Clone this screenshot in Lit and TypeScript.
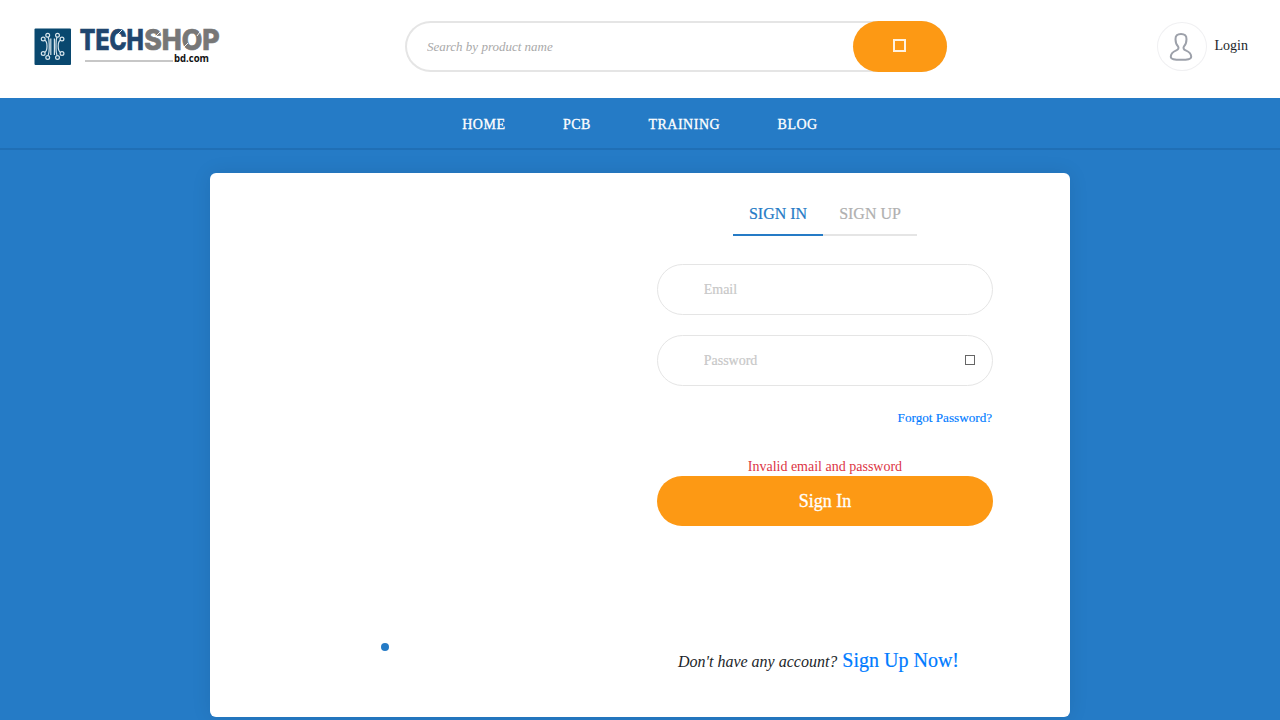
import { LitElement, html, css, svg } from "lit";
import { customElement, state } from "lit/decorators.js";

@customElement("shop-logo")
export class ShopLogo extends LitElement {
  static styles = css`
    :host { display: block; width: 190px; height: 42px; }
    svg { display: block; overflow: visible; }
    .word { font-family: Inter, "Liberation Sans", sans-serif; font-weight: 800; font-size: 28px; stroke-width: 0.7px; }
    .tech { fill: #20466f; stroke: #20466f; }
    .shop { fill: #777; stroke: #777; }
    .domain { font-family: "Open Sans", "Noto Sans", sans-serif; font-weight: 700; font-size: 10px; }
  `;
  render() {
    const half = svg`
      <path d="M17.8 11.5v16.500M15.200 10c1.200 3 1 4 1 9.200s.2 6.200-1 9.200M11.600 13c2 1 2.400 2.400 2.400 6.200s-.4 5.200-2.400 6.200" />
      <circle cx="14.700" cy="8.200" r="1.900" /><circle cx="10.200" cy="12" r="1.900" />
      <circle cx="10.200" cy="26.500" r="1.900" /><circle cx="14.700" cy="30.500" r="1.900" />`;
    return html`
      <svg width="190" height="42" viewBox="0 0 190 42">
        <rect x="1.5" y="1.5" width="36.5" height="36.5" rx="1" fill="#09486f" />
        <g fill="#09486f" stroke="#d7e5ec" stroke-width="1.2">
          <g>${half}</g>
          <g transform="translate(39.2 0) scale(-1 1)">${half}</g>
        </g>
        <text class="word tech" x="46.8" y="22.7" textLength="64" lengthAdjust="spacingAndGlyphs">TECH</text>
        <text class="word shop" x="111.2" y="22.7" textLength="75.5" lengthAdjust="spacingAndGlyphs">SHOP</text>
        <path d="M83 9l6-6M123 9l6-6M150 21l5-5M164 9l5-7" stroke="#fff" stroke-width=".9" />
        <path d="M52 34h88" stroke="#b4b4b4" stroke-width="1.5" />
        <text class="domain" x="141" y="34.5" fill="#111" textLength="35" lengthAdjust="spacingAndGlyphs">bd.com</text>
      </svg>`;
  }
}

@customElement("app-root")
export class AppRoot extends LitElement {
  @state() private tab = "SIGN IN";

  static styles = css`
    :host {
      display: block; height: 720px; overflow: hidden; background: #257bc6;
      font-family: "Liberation Serif", "Times New Roman", serif; font-size: 14px; line-height: 20px; color: #212529;
    }
    * { box-sizing: border-box; }
    button, input { font: inherit; border: 0; background: none; padding: 0; margin: 0; outline: 0; }
    .header { display: flex; align-items: flex-start; height: 98px; padding: 0 32px 0 33px; background: #fff; }
    .logo { margin-top: 27px; }
    .search {
      display: flex; width: 542px; height: 51px; margin: 21px 0 0 182px;
      border-radius: 26px; box-shadow: inset 0 0 0 2px #e5e5e5;
    }
    .search-input { flex: 1; min-width: 0; padding: 0 0 0 22px; font-size: 13px; font-style: italic; color: #555; }
    .search-input::placeholder { color: #a9a9a9; opacity: 1; }
    .search-button { display: flex; align-items: center; justify-content: center; width: 94px; padding: 0 1px 2px 0; border-radius: 26px; background: #fd9914; }
    .box { width: 13px; height: 13px; border: 2px solid #fff2df; }
    .box.small { width: 10px; height: 10px; margin-bottom: 1px; border: 1px solid #666; }
    .login { display: flex; align-items: center; gap: 8px; margin: 22px 0 0 auto; }
    .avatar { display: flex; align-items: center; justify-content: center; width: 50px; height: 49px; border: 1px solid #f0f0f2; border-radius: 50%; }
    .login-text { padding-bottom: 2px; }
    .nav {
      display: flex; justify-content: center; gap: 57.5px; height: 52px; padding: 17px 0 0;
      border-bottom: 2px solid #206fb5; color: #fff; letter-spacing: 0.5px; -webkit-text-stroke: 0.3px #fff;
    }
    .card {
      display: flex; width: 860px; height: 544px; margin: 23px auto 0; border-radius: 6px;
      background: #fff; box-shadow: 0 0 20px rgba(0, 0, 0, 0.09);
    }
    .visual { width: 430px; padding: 470px 0 0 171px; }
    .dot { width: 8px; height: 8px; border-radius: 50%; background: #257bc6; }
    .panel { display: flex; flex-direction: column; width: 335.5px; margin-left: 17.2px; padding-top: 24px; }
    .tabs { display: flex; justify-content: center; }
    .tab { height: 39px; padding: 2px 16px 5px; border-bottom: 2px solid #e5e5e5; font-size: 16px; color: #b0b0b0; -webkit-text-stroke: 0.2px; }
    .tab.active { border-color: #257bc6; color: #257bc6; }
    .field { display: flex; align-items: center; height: 51px; margin-top: 28px; padding: 0 17px 0 45.5px; border: 1px solid #e5e5e5; border-radius: 26px; }
    .field.second { margin-top: 20px; }
    .field-input { flex: 1; min-width: 0; }
    .field-input::placeholder { color: #c8c8c8; opacity: 1; -webkit-text-stroke: 0.2px #c8c8c8; }
    .forgot { margin-top: 22px; padding-right: 0.5px; text-align: right; font-size: 13.2px; color: #007bff; -webkit-text-stroke: 0.15px; }
    .error { margin-top: 29px; text-align: center; color: #dc3545; }
    .submit { height: 50px; margin-top: -0.6px; border-radius: 25px; background: #fd9914; color: #fff; font-size: 18px; -webkit-text-stroke: 0.3px #fff; }
    .join { display: flex; align-items: baseline; gap: 5px; margin: 121.6px 0 0 20.8px; white-space: nowrap; }
    .question { font-size: 16px; font-style: italic; }
    .now { font-size: 20px; line-height: 24px; color: #007bff; -webkit-text-stroke: 0.2px; }
  `;

  render() {
    return html`
      <header class="header">
        <shop-logo class="logo"></shop-logo>
        <div class="search">
          <input class="search-input" placeholder="Search by product name" />
          <button class="search-button" aria-label="Search"><span class="box"></span></button>
        </div>
        <div class="login">
          <span class="avatar">
            <svg width="25" height="30" viewBox="0 0 25 30" fill="none" stroke="#9da1aa" stroke-width="2" stroke-linejoin="round">
              <path d="M12 2c-3.8 0-5.6 1.7-5.5 5.2.1 3.5.9 5.6 2.4 7 1.2 1.6.5 3.3-1.600 4.200-3.300 1.400-5.400 2.900-5.500 6.200-.1 2.600 3.700 3.200 10.200 3.200s10.300-.6 10.200-3.200c-.1-3.300-2.200-4.800-5.500-6.200-2.100-.9-2.800-2.600-1.600-4.200 1.500-1.400 2.300-3.500 2.400-7C17.600 3.700 15.800 2 12 2z" />
            </svg>
          </span>
          <span class="login-text">Login</span>
        </div>
      </header>
      <nav class="nav">${["HOME", "PCB", "TRAINING", "BLOG"].map((item) => html`<span>${item}</span>`)}</nav>
      <main class="card">
        <div class="visual"><div class="dot"></div></div>
        <section class="panel">
          <div class="tabs">
            ${["SIGN IN", "SIGN UP"].map((name) => html`
              <button class="tab ${this.tab === name ? "active" : ""}" @click=${() => (this.tab = name)}>${name}</button>`)}
          </div>
          <label class="field"><input class="field-input" placeholder="Email" /></label>
          <label class="field second">
            <input class="field-input" type="password" placeholder="Password" />
            <span class="box small"></span>
          </label>
          <div class="forgot">Forgot Password?</div>
          <div class="error">Invalid email and password</div>
          <button class="submit">Sign In</button>
          <div class="join"><span class="question">Don't have any account?</span><span class="now">Sign Up Now!</span></div>
        </section>
      </main>`;
  }
}
